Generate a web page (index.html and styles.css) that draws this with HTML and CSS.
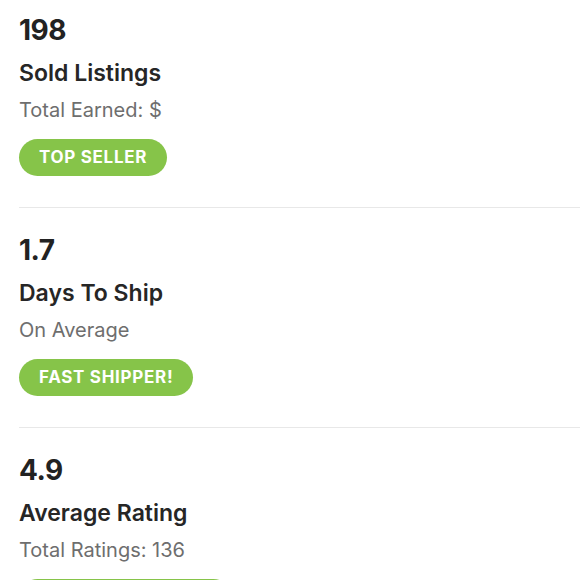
FILE: index.html
```html
<!DOCTYPE html>
<html>
<head>
<meta charset="utf-8">
<link rel="stylesheet" href="styles.css">
</head>
<body>
<div class="stats">
  <section class="stat">
    <div class="num">198</div>
    <div class="title">Sold Listings</div>
    <div class="sub">Total Earned: $</div>
    <span class="badge">TOP SELLER</span>
  </section>
  <section class="stat">
    <div class="num">1.7</div>
    <div class="title">Days To Ship</div>
    <div class="sub">On Average</div>
    <span class="badge">FAST SHIPPER!</span>
  </section>
  <section class="stat">
    <div class="num">4.9</div>
    <div class="title">Average Rating</div>
    <div class="sub">Total Ratings: 136</div>
    <span class="badge">TOP RATED SELLER</span>
  </section>
</div>
</body>
</html>
```
FILE: styles.css
```css
html, body {
  margin: 0;
  padding: 0;
  background: #fff;
}
body {
  font-family: Inter, "Open Sans", sans-serif;
  color: #222;
  overflow: hidden;
  height: 580px;
}
.stats {
  padding-left: 19px;
}
.stat {
  display: flex;
  flex-direction: column;
  align-items: flex-start;
  padding: 25px 0 31px;
  border-bottom: 1px solid #e8e8e8;
}
.stat:first-child {
  padding-top: 13px;
}
.num {
  font-size: 28px;
  font-weight: 700;
  line-height: 34px;
  letter-spacing: -0.5px;
  color: #222;
}
.title {
  margin-top: 12px;
  font-size: 23px;
  font-weight: 600;
  line-height: 28px;
  color: #262626;
}
.sub {
  margin-top: 11px;
  font-size: 20px;
  line-height: 24px;
  color: #6e6e6e;
}
.badge {
  margin-top: 17px;
  height: 37px;
  line-height: 37px;
  padding: 0 20px;
  border-radius: 19px;
  background: #86c449;
  color: #fff;
  font-size: 17px;
  font-weight: 700;
  letter-spacing: 0.7px;
}
```
